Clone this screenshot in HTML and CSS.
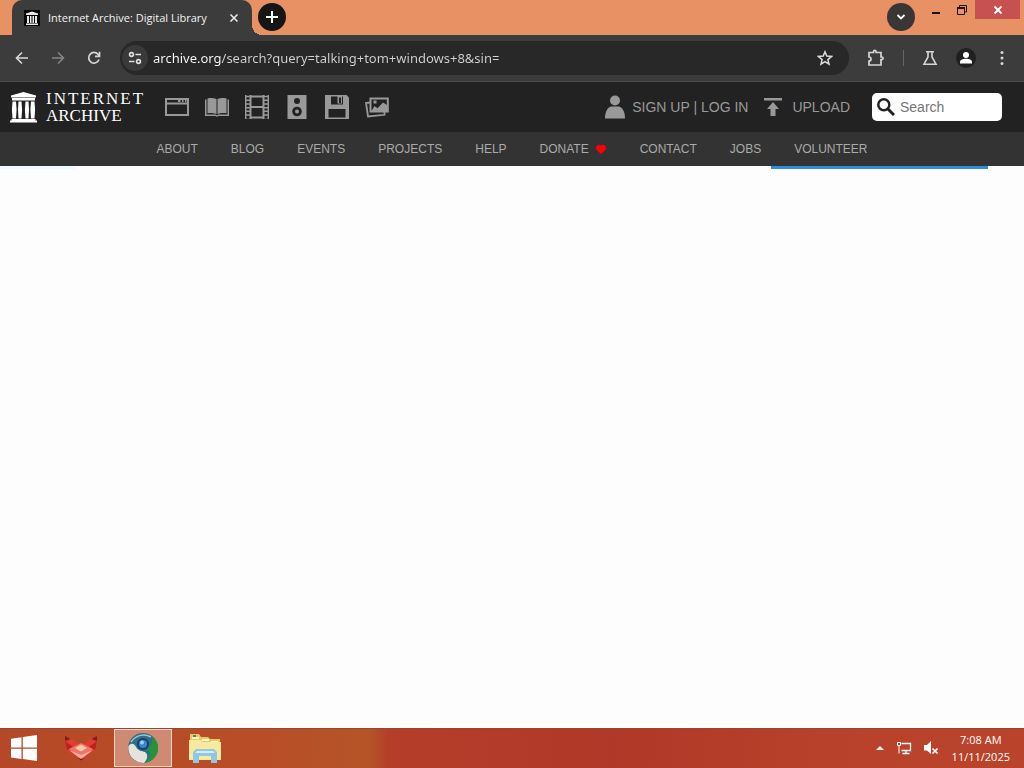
FILE: index.html
```html
<!DOCTYPE html>
<html lang="en">
<head>
    <meta charset="UTF-8">
    <meta name="viewport" content="width=device-width, initial-scale=1.0">
    <title>Internet Archive: Digital Library</title>
    <link rel="stylesheet" href="styles.css">
</head>
<body>
    <!-- Window title bar with tabs -->
    <div class="tab-strip">
        <div class="tab">
            <svg class="favicon" width="16" height="16" viewBox="0 0 16 16">
                <rect width="16" height="16" fill="#050505"/>
                <path fill="#e8e8e8" d="M8 1.500l6 2V5H2V3.500zM3 6h2v7H3zM6 6h1.500v7H6zM8.500 6H10v7H8.500zM11 6h2v7h-2zM2 13.500h12V15H2z"/>
            </svg>
            <span class="tab-title">Internet Archive: Digital Library</span>
            <button class="tab-close" aria-label="Close tab">
                <svg width="10" height="10" viewBox="0 0 10 10" fill="none" stroke="#e8e8e8" stroke-width="1.6"><path d="M1.500 1.500l7 7M8.500 1.500l-7 7"/></svg>
            </button>
        </div>
        <button class="round-btn new-tab" aria-label="New tab">
            <svg width="14" height="14" viewBox="0 0 14 14" fill="none" stroke="#fff" stroke-width="2"><path d="M7 1v12M1 7h12"/></svg>
        </button>
        <button class="round-btn tab-search" aria-label="Search tabs">
            <svg width="10" height="10" viewBox="0 0 10 10" fill="none" stroke="#fff" stroke-width="1.8"><path d="M1.500 3l3.500 3.500L8.500 3"/></svg>
        </button>
        <div class="window-buttons">
            <button class="window-btn" aria-label="Minimize">
                <svg width="10" height="10" viewBox="0 0 10 10"><path fill="#1b1410" d="M1 7h8v2H1z"/></svg>
            </button>
            <button class="window-btn" aria-label="Restore">
                <svg width="12" height="12" viewBox="0 0 12 12" fill="none" stroke="#1b1410"><path d="M3.500 3V1.500h7V8H9"/><path d="M1.500 4h7v6.500h-7z"/><path d="M1 4h8" stroke-width="2"/></svg>
            </button>
            <button class="window-btn window-close" aria-label="Close">
                <svg width="10" height="10" viewBox="0 0 10 10" fill="none" stroke="#fff" stroke-width="1.8"><path d="M1.500 1.500l7 7M8.500 1.500l-7 7"/></svg>
            </button>
        </div>
    </div>

    <!-- Browser toolbar -->
    <div class="toolbar">
        <button class="tool-btn" aria-label="Back">
            <svg width="16" height="16" viewBox="0 0 16 16" fill="none" stroke="#d6d6d6" stroke-width="1.700"><path d="M14 8H3M8 2.500L2.500 8 8 13.500"/></svg>
        </button>
        <button class="tool-btn" aria-label="Forward" disabled>
            <svg width="16" height="16" viewBox="0 0 16 16" fill="none" stroke="#858585" stroke-width="1.600"><path d="M2 8h11M8 2.500L13.500 8 8 13.500"/></svg>
        </button>
        <button class="tool-btn" aria-label="Reload">
            <svg width="16" height="16" viewBox="0 0 16 16" fill="none" stroke="#d6d6d6" stroke-width="1.700"><path d="M13 9.500A5.300 5.300 0 1 1 12 4.300L13.500 6"/><path d="M13.500 1.800V6.300H9"/></svg>
        </button>
        <div class="address-bar">
            <button class="site-info" aria-label="View site information">
                <svg width="14" height="14" viewBox="0 0 14 14" fill="none" stroke="#e0e0e0" stroke-width="1.600"><circle cx="3.500" cy="3.500" r="1.900"/><path d="M7.500 3.500H13M1 10.500h5.500"/><circle cx="10.500" cy="10.500" r="1.900"/></svg>
            </button>
            <input class="address" type="text" aria-label="Address" value="archive.org/search?query=talking+tom+windows+8&amp;sin=">
            <button class="tool-btn" aria-label="Bookmark this tab">
                <svg width="16" height="16" viewBox="0 0 16 16" fill="none" stroke="#dcdcdc" stroke-width="1.500"><path d="M8 1.800l1.800 4.300 4.700.4-3.600 3.100 1.100 4.600L8 11.700l-4 2.500 1.100-4.600L1.500 6.500l4.700-.4z"/></svg>
            </button>
        </div>
        <div class="toolbar-actions">
            <button class="tool-btn" aria-label="Extensions">
                <svg width="18" height="18" viewBox="0 0 18 18" fill="none" stroke="#d6d6d6" stroke-width="1.700"><path d="M2 3.500h4.500v-.8a1.300 1.300 0 0 1 2.600 0v.8H14V8h.8a1.300 1.300 0 0 1 0 2.600H14V16H2v-4a2 2 0 0 0 0-4z"/></svg>
            </button>
            <span class="divider"></span>
            <button class="tool-btn" aria-label="Labs">
                <svg width="16" height="16" viewBox="0 0 16 16" fill="none" stroke="#d6d6d6" stroke-width="1.600"><path d="M4 1.800h8M6 2v5L2 14.200h12L10 7V2"/></svg>
            </button>
            <button class="tool-btn profile" aria-label="Profile">
                <svg width="14" height="14" viewBox="0 0 14 14" fill="#fff"><circle cx="7" cy="4" r="3"/><path d="M1 12.500V11c0-2 3-3.200 6-3.200s6 1.200 6 3.200v1.500z"/></svg>
            </button>
            <button class="tool-btn" aria-label="Menu">
                <svg width="4" height="16" viewBox="0 0 4 16" fill="#d6d6d6"><circle cx="2" cy="2.500" r="1.500"/><circle cx="2" cy="8" r="1.500"/><circle cx="2" cy="13.500" r="1.500"/></svg>
            </button>
        </div>
    </div>

    <!-- Site header -->
    <header class="topnav">
        <a class="logo" href="#">
            <svg width="27" height="32" viewBox="0 0 27 32" fill="#fff"><path d="M1 4.500L13.500 1 26 4.500V6.500H1zM2 7h23v2.500H2zM2.500 10.500h3.500l.6 8-.6 9H2.500l-.6-9zM8.500 10.500h3l.6 8-.6 9h-3l-.5-9zM15.500 10.500h3l.5 8-.5 9h-3l-.6-9zM21 10.500h3.500l.6 8-.6 9H21l-.6-9zM1.500 28h24v1.500h-24zM0 29.500h27v2H0z"/></svg>
            <span class="wordmark"><span class="wide">INTERNET</span><span>ARCHIVE</span></span>
        </a>
        <nav class="media-menu" aria-label="Media types">
            <a href="#" aria-label="Web">
                <svg width="24" height="24" viewBox="0 0 24 24" fill="none" stroke="#999" stroke-width="2"><path d="M1 4h22v16H1zM1 8.500h22"/><path d="M13 6h2.500M17 6h1.500M20 6h1.500"/></svg>
            </a>
            <a href="#" aria-label="Texts">
                <svg width="24" height="24" viewBox="0 0 24 24" fill="#999"><path d="M2.500 3.500c3-.6 6-.6 9 .4v15c-3-1-6-1-9-.6zM21.500 3.500c-3-.6-6-.6-9 .4v15c3-1 6-1 9-.6z"/><path d="M0 4.500h1.500v15h9l1.500.7 1.500-.7h9v-15H24V21H13.500l-1.500.8-1.500-.8H0z"/></svg>
            </a>
            <a href="#" aria-label="Video">
                <svg width="24" height="24" viewBox="0 0 24 24" fill="none" stroke="#999"><path stroke-width="2" d="M5.500 0v24M18.500 0v24M5 1.500h14M5 12h14M5 22.500h14"/><path stroke-width="1.500" d="M.7 0v24M23.300 0v24"/><path stroke-width="4.500" stroke-dasharray="1.500 2.200" d="M3 .8v22.500M21 .8v22.500"/></svg>
            </a>
            <a href="#" aria-label="Audio">
                <svg width="24" height="24" viewBox="0 0 24 24"><path fill="#999" d="M2.500 0h19v24h-19z"/><g fill="#222"><circle cx="12" cy="6" r="3"/><circle cx="12" cy="16.500" r="4.800"/></g><circle cx="12" cy="16.500" r="2" fill="#999"/></svg>
            </a>
            <a href="#" aria-label="Software">
                <svg width="24" height="24" viewBox="0 0 24 24"><path fill="#999" d="M0 0h21.500L24 2.500V24H0z"/><path fill="#222" d="M6 1.500h12v8H6zM3.500 14h17v8.500h-17z"/><path fill="#999" d="M12.500 1h4.500v7.500h-4.500z"/><path fill="#222" d="M14 2.500h2V8h-2z"/></svg>
            </a>
            <a href="#" aria-label="Images">
                <svg width="24" height="24" viewBox="0 0 24 24" fill="none" stroke="#999"><path stroke-width="1.800" d="M5 7.500L1 8l2 13.500 16.500-1.700V17"/><path stroke-width="2" d="M5.500 3.500h17.300v13H5.500z"/><path stroke="none" fill="#999" d="M6.500 16l3-5 3 2.300L18 7.500l4 2.500v6zM8.500 5.500h3v3h-3z"/></svg>
            </a>
        </nav>
        <div class="user-menu">
            <svg width="20" height="24" viewBox="0 0 20 24" fill="#999"><circle cx="10" cy="5.500" r="5"/><path d="M0 23.500C0 16 3 12 6.500 11.500h7C17 12 20 16 20 23.500z"/></svg>
            <span class="account"><a href="#">SIGN UP</a> | <a href="#">LOG IN</a></span>
        </div>
        <a class="upload" href="#">
            <svg width="18" height="20" viewBox="0 0 18 20" fill="#999"><path d="M0 1h18v2.500H0zM9 5l6 7h-3.500v7h-5v-7H3z"/></svg>
            <span>UPLOAD</span>
        </a>
        <form class="search">
            <label for="search-box" aria-label="Search">
                <svg width="18" height="18" viewBox="0 0 18 18" fill="none" stroke="#222"><circle cx="6.800" cy="6.800" r="5.500" stroke-width="2.500"/><path d="M10.500 10.500l6.500 6.500" stroke-width="3"/></svg>
            </label>
            <input id="search-box" type="text" placeholder="Search">
        </form>
    </header>

    <nav class="subnav" aria-label="Site">
        <a href="#">ABOUT</a>
        <a href="#">BLOG</a>
        <a href="#">EVENTS</a>
        <a href="#">PROJECTS</a>
        <a href="#">HELP</a>
        <a href="#" class="donate">DONATE
            <svg width="12" height="12" viewBox="0 0 12 12" fill="#f00"><path d="M6 11L1.500 6.800C-.5 4 3.500-.5 6 2.800 8.500-.5 12.500 4 10.500 6.800z"/></svg>
        </a>
        <a href="#">CONTACT</a>
        <a href="#">JOBS</a>
        <a href="#">VOLUNTEER</a>
    </nav>

    <main class="content">
        <div class="loading-bar">
            <div class="loading-trail"></div>
            <div class="loading-chunk"></div>
        </div>
    </main>

    <!-- Desktop taskbar -->
    <footer class="taskbar">
        <button class="task start" aria-label="Start">
            <svg width="26" height="26" viewBox="0 0 26 26" fill="#fff"><path d="M0 3.800L10.500 2.200v10.300H0zM11.800 2L26 0v12.500H11.800zM0 13.700h10.500V24L0 22.400zM11.800 13.700H26V26l-14.200-2z"/></svg>
        </button>
        <button class="task" aria-label="Pinned app">
            <svg width="34" height="26" viewBox="0 0 34 26"><path fill="#7c2320" d="M1 1l4 2 2 5-6-2zM33 1l-4 2-2 5 6-2z"/><path fill="#e33c32" d="M1 6l7-2 9 7 9-7 7 2-2 9-14 10L3 15z"/><path fill="#bb221f" d="M1 6l8 6-6 3zM33 6l-8 6 6 3z"/><path fill="#ed7563" d="M5 14l12-6 12 6-12 9z"/><path fill="#f8c9ae" d="M11 13l6-3.500 6 3.500-6 3.500z"/><path fill="#f7b2a0" d="M5 15l12 5 12-5-12 9z"/><path fill="#5f1a17" d="M14 23l3 2.500 3-2.500-3 1z"/></svg>
        </button>
        <button class="task active" aria-label="Browser">
            <svg width="32" height="32" viewBox="0 0 32 32"><circle cx="16" cy="16" r="15" fill="#2e6f86"/><path fill="#259438" d="M25 4a15 15 0 0 1-8 27c7-5 8-10 3-14 5-3 6-8 5-13z"/><path fill="#e4e4dc" d="M1.500 14C4 11 7 11 9 15c2 4 6 4 9 5 4 3 2 8-1 11A15 15 0 0 1 1.500 14z"/><path fill="none" stroke="#9fc4c8" stroke-width="1.500" d="M4 10C9 3 17 1 24 5"/><circle cx="16" cy="12" r="6" fill="#183f74"/><circle cx="16" cy="12" r="4" fill="#3c86cf"/><circle cx="15" cy="10.500" r="2" fill="#9fd0f4"/></svg>
        </button>
        <button class="task" aria-label="File Explorer">
            <svg width="32" height="30" viewBox="0 0 32 30"><path fill="#e7c967" d="M1 1h9l2 3h7l2 2h10v20H1z"/><path fill="#f8e9a1" d="M0 7h12l2 2h18v18H0z"/><path fill="#fff6cc" d="M3 4h7v2H3zM13 6h7v2h-7zM22 8h7v1h-7z"/><path fill="#4a8c55" d="M4 2h3v2H4z"/><path fill="#8fc8e6" d="M7 16h18l3 3v11h-6v-7H10v7H4V19z"/><path fill="#d4edf8" d="M8 18h16l2 2H6z"/></svg>
        </button>
        <div class="tray">
            <svg width="8" height="4" viewBox="0 0 8 4" fill="#fff"><path d="M0 4l4-4 4 4z"/></svg>
            <svg width="16" height="14" viewBox="0 0 16 14" fill="none" stroke="#fff"><path d="M5.500 2.500h9v7h-9M10 10v2.500M6.500 12.500h7" stroke-width="1.300"/><path d="M1.500 1.500h3v3h-3zM3 5v7.500"/></svg>
            <svg width="14" height="14" viewBox="0 0 14 14"><path fill="#fff" d="M0 4h3l4-4v13L3 9.500H0z"/><path stroke="#fff" stroke-width="1.600" d="M8.500 7.500l5 5M13.500 7.500l-5 5"/></svg>
            <div class="clock">
                <span>7:08 AM</span>
                <span>11/11/2025</span>
            </div>
        </div>
    </footer>
</body>
</html>
```
FILE: styles.css
```css
* {
    box-sizing: border-box;
}
body {
    margin: 0;
    min-height: 100vh;
    display: flex;
    flex-direction: column;
    font-family: "Liberation Sans", Arial, sans-serif;
    background-color: #fdfdfd;
}
svg {
    display: block;
    flex: none;
}
a {
    color: inherit;
    text-decoration: none;
}
button {
    display: flex;
    align-items: center;
    justify-content: center;
    flex: none;
    padding: 0;
    border: none;
    background: none;
}
input {
    min-width: 0;
    padding: 0;
    border: none;
    outline: none;
    background: none;
}

/* tabs */
.tab-strip {
    display: flex;
    align-items: flex-start;
    height: 35px;
    padding-left: 12px;
    background-color: #e89165;
}
.tab {
    position: relative;
    display: flex;
    align-items: center;
    width: 240px;
    height: 35px;
    padding: 0 12px;
    border-radius: 10px 10px 0 0;
    background-color: #3c3c3c;
}
.tab::after {
    content: "";
    position: absolute;
    bottom: 0;
    left: 100%;
    width: 10px;
    height: 10px;
    background: radial-gradient(circle at 100% 0, transparent 10px, #3c3c3c 10px);
}
.favicon {
    margin-right: 8px;
}
.tab-title {
    flex: 1;
    white-space: nowrap;
    font: 11px/20px "Open Sans", sans-serif;
    color: #f2f2f2;
}
.tab-close {
    width: 12px;
    height: 20px;
}
.round-btn {
    width: 28px;
    height: 28px;
    margin-top: 3px;
    border-radius: 50%;
}
.new-tab {
    margin-left: 6px;
    background-color: #161616;
}
.tab-search {
    margin-left: auto;
    background-color: #3a3635;
}
.window-buttons {
    display: flex;
    margin-left: 8px;
    padding-right: 4px;
}
.window-btn {
    width: 26px;
    height: 19px;
}
.window-close {
    width: 45px;
    background-color: #c75050;
}

/* toolbar */
.toolbar {
    display: flex;
    align-items: center;
    height: 47px;
    padding: 0 14px 1px;
    gap: 20px;
    background-color: #3c3c3c;
    border-bottom: 1px solid #4a4a4a;
}
.tool-btn {
    min-width: 16px;
    height: 20px;
}
.address-bar {
    flex: 1;
    display: flex;
    align-items: center;
    height: 34px;
    margin-left: -2px;
    padding: 0 16px 0 2px;
    border-radius: 17px;
    background-color: #282828;
}
.site-info {
    width: 26px;
    height: 26px;
    margin-right: 5px;
    border-radius: 50%;
    background-color: #3a3a3a;
}
.address {
    flex: 1;
    height: 24px;
    font: 13px/24px "Noto Sans", sans-serif;
    color: transparent;
    /* host part is brighter than the rest of the url */
    background: linear-gradient(to right, #fff 69px, #d2d2d2 69px);
    -webkit-background-clip: text;
    background-clip: text;
}
.toolbar-actions {
    display: flex;
    align-items: center;
    gap: 18px;
    margin-left: -2px;
}
.divider {
    width: 1px;
    height: 16px;
    background-color: #666;
}
.profile {
    width: 20px;
    border-radius: 50%;
    background-color: #202020;
}

/* site header */
.topnav {
    display: flex;
    align-items: center;
    height: 50px;
    padding: 0 22px 0 10px;
    background-color: #222;
    color: #999;
    font-size: 14px;
    line-height: 20px;
}
.logo {
    display: flex;
    align-items: center;
    gap: 9px;
    width: 155px;
    color: #fff;
}
.wordmark {
    display: flex;
    flex-direction: column;
    font: 17px/17px "Liberation Serif", serif;
}
.wordmark .wide {
    letter-spacing: 2px;
}
.media-menu {
    display: flex;
    gap: 16px;
}
.user-menu {
    display: flex;
    align-items: center;
    gap: 7px;
    margin-left: auto;
}
.upload {
    display: flex;
    align-items: center;
    gap: 10px;
    margin-left: 16px;
}
.search {
    display: flex;
    align-items: center;
    gap: 5px;
    width: 130px;
    height: 28px;
    margin-left: 22px;
    padding: 0 5px;
    border-radius: 5px;
    background-color: #fff;
}
.search input {
    flex: 1;
    font: 14px/20px "Liberation Sans", Arial, sans-serif;
    color: #222;
}
.search input::placeholder {
    color: #757575;
}
.subnav {
    display: flex;
    align-items: center;
    justify-content: center;
    gap: 33px;
    height: 34px;
    background-color: #333;
    color: #aaa;
    font-size: 12px;
    line-height: 20px;
}
.donate {
    display: flex;
    align-items: center;
    gap: 6px;
}

/* page */
.content {
    flex: 1;
}
.loading-bar {
    display: flex;
    justify-content: space-between;
    height: 3px;
    padding-right: 36px;
}
.loading-trail {
    width: 75px;
    background-color: #effcff;
}
.loading-chunk {
    width: 22%;
    background-color: #2b8fe0;
}

/* taskbar */
.taskbar {
    display: flex;
    align-items: center;
    height: 40px;
    padding-bottom: 1px;
    border-top: 1px solid #8c4a35;
    background: linear-gradient(to right, #b54927 0%, #b84d28 25%, #b65427 36%, #b43e2a 38%, #b03828 60%, #b7412a 80%, #ba442b 100%);
}
.task {
    width: 58px;
    height: 38px;
    margin-right: 4px;
}
.start {
    width: 48px;
}
.active {
    border: 1px solid #f3d5c8;
    background-color: #d08a74;
}
.tray {
    display: flex;
    align-items: center;
    gap: 12px;
    margin-left: auto;
    padding-right: 14px;
}
.clock {
    display: flex;
    flex-direction: column;
    align-items: center;
    margin-left: 2px;
    font: 11px/17px "Open Sans", sans-serif;
    color: #fff;
}
```
